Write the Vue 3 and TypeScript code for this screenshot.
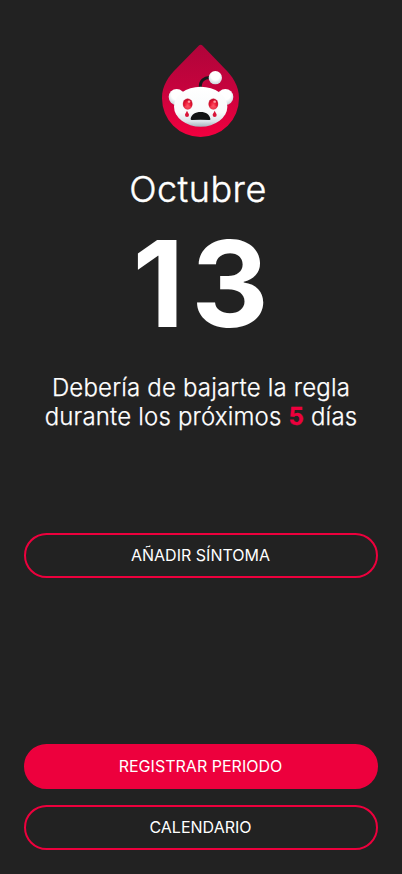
<script setup lang="ts">
import { ref } from 'vue'

const month = ref<string>('Octubre')
const day = ref<number>(13)
const remainingDays = ref<number>(5)
</script>

<template>
  <main class="screen">
    <svg class="logo" viewBox="0 0 276 312" aria-hidden="true">
      <defs>
        <linearGradient id="drop" x1="0" y1="0" x2="0" y2="1">
          <stop offset="0" stop-color="#b0043a" />
          <stop offset="0.45" stop-color="#c4033d" />
          <stop offset="1" stop-color="#f2003f" />
        </linearGradient>
        <linearGradient id="head" x1="0" y1="0" x2="0" y2="1">
          <stop offset="0" stop-color="#ffffff" />
          <stop offset="0.65" stop-color="#f8fafb" />
          <stop offset="0.87" stop-color="#dbe4e9" />
          <stop offset="1" stop-color="#a5b5bd" />
        </linearGradient>
        <radialGradient id="ball" cx="0.5" cy="0.35" r="0.65">
          <stop offset="0.5" stop-color="#ffffff" />
          <stop offset="1" stop-color="#c9d5db" />
        </radialGradient>
        <radialGradient id="eye" cx="0.5" cy="0.6" r="0.6">
          <stop offset="0" stop-color="#ff4a60" />
          <stop offset="0.6" stop-color="#e5132f" />
          <stop offset="1" stop-color="#b80a2c" />
        </radialGradient>
      </defs>
      <path
        d="M131 23Q137 18 143 23L208 91C232 115 252 142 252 181A115.500 116 0 0 1 21 181C21 142 41 115 65 91Z"
        fill="url(#drop)"
      />
      <path d="M136 150C134 128 148 117 168 119" fill="none" stroke="#17191b" stroke-width="9" />
      <circle cx="181" cy="119" r="20" fill="url(#ball)" />
      <circle cx="65" cy="177" r="24" fill="url(#ball)" />
      <circle cx="211" cy="177" r="24" fill="url(#ball)" />
      <ellipse cx="137" cy="206" rx="80" ry="60" fill="url(#head)" />
      <ellipse cx="98" cy="198" rx="15" ry="17" fill="#e58c9b" />
      <ellipse cx="175" cy="198" rx="15" ry="17" fill="#e58c9b" />
      <ellipse cx="98" cy="198" rx="14" ry="16" fill="url(#eye)" />
      <ellipse cx="175" cy="198" rx="14" ry="16" fill="url(#eye)" />
      <ellipse cx="102" cy="191" rx="4" ry="3.500" fill="#ff9ea5" />
      <ellipse cx="179" cy="191" rx="4" ry="3.500" fill="#ff9ea5" />
      <path d="M86 207Q98 196 110 207Q106 214 98 214T86 207Z" fill="#ff7580" opacity="0.4" />
      <path d="M163 207Q175 196 187 207Q183 214 175 214T163 207Z" fill="#ff7580" opacity="0.4" />
      <path d="M96 218C100 226 102 228 102 231A6 6 0 0 1 90 231C90 228 92 226 96 218Z" fill="#d91438" />
      <path d="M179 218C183 226 185 228 185 231A6 6 0 0 1 173 231C173 228 175 226 179 218Z" fill="#d91438" />
      <path d="M107 242C109 230 121 222 137 222S164 230 166 242Q167 246 163 246Q137 244 111 246Q106 246 107 242Z" fill="#101214" />
    </svg>

    <header class="date">
      <h1 class="month">{{ month }}</h1>
      <div class="day">{{ day }}</div>
    </header>

    <p class="forecast">
      Debería de bajarte la regla<br />durante los próximos <strong>{{ remainingDays }}</strong> días
    </p>

    <button class="button symptom" type="button">AÑADIR SÍNTOMA</button>

    <footer class="actions">
      <button class="button primary" type="button">REGISTRAR PERIODO</button>
      <button class="button" type="button">CALENDARIO</button>
    </footer>
  </main>
</template>

<style>
body {
  margin: 0;
  background: #222;
}
</style>

<style scoped>
.screen {
  box-sizing: border-box;
  display: flex;
  flex-direction: column;
  align-items: center;
  height: 874px;
  padding: 38px 24px 24px;
  background: #222;
  color: #fff;
  font-family: Inter, sans-serif;
}

.logo {
  flex: none;
  width: 92px;
  height: 104px;
}

.date {
  padding-top: 25px;
  padding-right: 6px;
  text-align: center;
}

.month {
  margin: 0;
  font-size: 36px;
  font-weight: 300;
  line-height: 44px;
  letter-spacing: 0.45px;
  -webkit-text-stroke: 0.4px #fff;
}

.day {
  margin-right: -12px;
  font-size: 120px;
  font-weight: 700;
  line-height: 145px;
  letter-spacing: 7px;
}

.forecast {
  margin: 17px 0 0;
  font-size: 24px;
  font-weight: 300;
  line-height: 29px;
  text-align: center;
  white-space: nowrap;
  letter-spacing: 0.18px;
  -webkit-text-stroke: 0.25px currentColor;
}

.forecast strong {
  color: #ed003d;
  font-weight: 700;
  -webkit-text-stroke: 0.3px currentColor;
}

.button {
  box-sizing: border-box;
  flex: none;
  width: 100%;
  height: 45px;
  padding: 0 1px 0 0;
  border: 2px solid #ed003d;
  border-radius: 23px;
  background: transparent;
  color: #fff;
  font: 400 16px/19px Inter, sans-serif;
  letter-spacing: 0.02px;
}

.symptom {
  margin-top: 102px;
}

.primary {
  background: #ed003d;
}

.actions {
  display: flex;
  flex-direction: column;
  gap: 16px;
  width: 100%;
  margin-top: auto;
}
</style>
